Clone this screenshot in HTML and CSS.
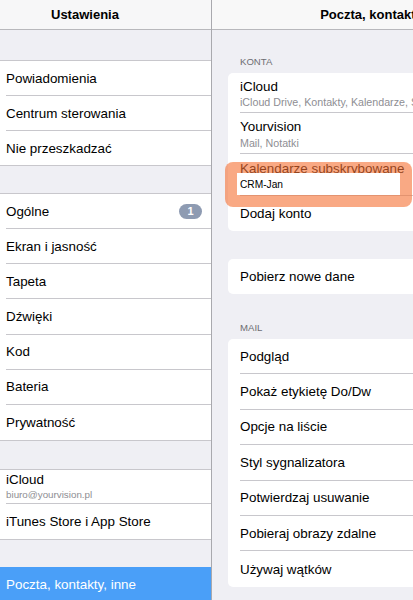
FILE: index.html
```html
<!DOCTYPE html>
<html lang="pl">
<head>
<meta charset="utf-8">
<title>Ustawienia</title>
<link rel="stylesheet" href="styles.css">
</head>
<body>
<div class="screen">
  <aside class="master">
    <header class="bar bar-left"><span class="bar-title">Ustawienia</span></header>

    <div class="group g1">
      <div class="row h35"><div class="cell">Powiadomienia</div></div>
      <div class="row h35"><div class="cell">Centrum sterowania</div></div>
      <div class="row h34"><div class="cell last">Nie przeszkadzać</div></div>
    </div>

    <div class="group g2">
      <div class="row h353"><div class="cell">Ogólne<span class="badge">1</span></div></div>
      <div class="row h353"><div class="cell">Ekran i jasność</div></div>
      <div class="row h353"><div class="cell">Tapeta</div></div>
      <div class="row h353"><div class="cell">Dźwięki</div></div>
      <div class="row h353"><div class="cell">Kod</div></div>
      <div class="row h353"><div class="cell">Bateria</div></div>
      <div class="row h353"><div class="cell last">Prywatność</div></div>
    </div>

    <div class="group g3">
      <div class="row h34"><div class="cell sub-cell"><span>iCloud</span><span class="sub">biuro@yourvision.pl</span></div></div>
      <div class="row h35"><div class="cell last">iTunes Store i App Store</div></div>
    </div>

    <div class="selected">Poczta, kontakty, inne</div>
  </aside>

  <main class="detail">
    <div class="detail-inner">
      <header class="bar bar-right"><span class="bar-title">Poczta, kontakty, inne</span></header>

      <div class="section-label s-konta">KONTA</div>
      <div class="card">
        <div class="crow r-icloud"><div class="ccell csub"><span>iCloud</span><span class="sub">iCloud Drive, Kontakty, Kalendarze, Safari, Notatki</span></div></div>
        <div class="crow r-yv"><div class="ccell csub"><span>Yourvision</span><span class="sub">Mail, Notatki</span></div></div>
        <div class="crow r-kal">
          <div class="ccell kal-cell"><span>Kalendarze subskrybowane</span></div>
          <div class="annot"><div class="annot-box">CRM-Jan</div></div>
        </div>
        <div class="crow r-35"><div class="ccell last">Dodaj konto</div></div>
      </div>

      <div class="card card-gap">
        <div class="crow r-35"><div class="ccell last">Pobierz nowe dane</div></div>
      </div>

      <div class="section-label s-mail">MAIL</div>
      <div class="card">
        <div class="crow r-354"><div class="ccell">Podgląd</div></div>
        <div class="crow r-354"><div class="ccell">Pokaż etykietę Do/Dw</div></div>
        <div class="crow r-354"><div class="ccell">Opcje na liście</div></div>
        <div class="crow r-354"><div class="ccell">Styl sygnalizatora</div></div>
        <div class="crow r-354"><div class="ccell">Potwierdzaj usuwanie</div></div>
        <div class="crow r-354"><div class="ccell">Pobieraj obrazy zdalne</div></div>
        <div class="crow r-354"><div class="ccell last">Używaj wątków</div></div>
      </div>
    </div>
  </main>
</div>
</body>
</html>
```

FILE: styles.css
```css
* { box-sizing: border-box; }

html, body {
  margin: 0;
  padding: 0;
  background: #efeff4;
}

body {
  font-family: "Liberation Sans", Arial, sans-serif;
  font-size: 13.4px;
  color: #000;
  width: 413px;
  height: 600px;
  overflow: hidden;
}

.screen {
  display: flex;
  width: 413px;
  height: 600px;
  overflow: hidden;
}

/* ---------- master (left) ---------- */
.master {
  width: 212px;
  flex: none;
  border-right: 1px solid #a9a9ae;
  background: #efeff4;
  display: flex;
  flex-direction: column;
}

.bar {
  height: 30px;
  background: #f7f7f8;
  border-bottom: 1px solid #b8b8bc;
  display: flex;
  align-items: center;
  font-weight: bold;
  font-size: 13px;
  flex: none;
}

.bar-left {
  padding-left: 51px;
}

.group {
  background: #fff;
  border-top: 1px solid #c8c7cc;
  border-bottom: 1px solid #c8c7cc;
  flex: none;
}

.g1 { margin-top: 30px; }
.g2 { margin-top: 27px; }
.g3 { margin-top: 28px; }

.row {
  display: flex;
  padding-left: 6px;
}

.h34 { height: 34px; }
.h35 { height: 35px; }
.h353 { height: 35.15px; }

.cell {
  flex: 1;
  display: flex;
  align-items: center;
  border-bottom: 1px solid #c8c7cc;
  padding-right: 9px;
  white-space: nowrap;
}

.cell.last { border-bottom: none; }

.badge {
  margin-left: auto;
  background: #8e9bb2;
  color: #fff;
  font-size: 11px;
  font-weight: bold;
  width: 23px;
  height: 15px;
  border-radius: 8px;
  display: flex;
  align-items: center;
  justify-content: center;
}

.cell.sub-cell {
  flex-direction: column;
  align-items: flex-start;
  justify-content: center;
}

.sub-cell span:first-child {
  line-height: 15px;
}

.sub {
  font-size: 9.8px;
  color: #8e8e93;
  line-height: 13px;
  margin-top: 1px;
}

.selected {
  margin-top: 27px;
  height: 36px;
  background: #4a9ff8;
  color: #fff;
  display: flex;
  align-items: center;
  padding-left: 6px;
  flex: none;
}

/* ---------- detail (right) ---------- */
.detail {
  flex: 1;
  overflow: hidden;
  position: relative;
}

.detail-inner {
  width: 352px;
}

.bar-right {
  justify-content: center;
  background: #f8f8f8;
}

.section-label {
  display: flex;
  align-items: flex-end;
  padding-left: 28px;
  padding-bottom: 5px;
  font-size: 9.6px;
  color: #6d6d72;
  line-height: 12px;
}

.s-konta { height: 43px; }
.s-mail { height: 45px; }

.card {
  margin-left: 16px;
  background: #fff;
  border-radius: 5px;
}

.card-gap { margin-top: 28px; }

.crow {
  display: flex;
  padding-left: 12px;
  position: relative;
}

.ccell {
  flex: 1;
  display: flex;
  align-items: center;
  border-bottom: 1px solid #c8c7cc;
  white-space: nowrap;
  overflow: hidden;
}

.ccell.last { border-bottom: none; }

.r-icloud { height: 40px; }
.r-yv { height: 41px; }
.r-kal { height: 42px; }
.r-35 { height: 35px; }
.r-354 { height: 35.4px; }

.ccell.csub {
  flex-direction: column;
  align-items: flex-start;
  justify-content: flex-start;
  padding-top: 6px;
}

.csub span:first-child {
  line-height: 15px;
}

.csub .sub {
  font-size: 10.7px;
  margin-top: 2px;
}

.r-yv .csub .sub {
  margin-top: 3px;
}

.ccell.kal-cell {
  align-items: flex-start;
  padding-top: 7px;
  line-height: 15px;
}

/* annotation highlight drawn over the row */
.annot {
  position: absolute;
  left: -3px;
  top: 8px;
  width: 187px;
  height: 45px;
  border-radius: 8px;
  background: rgba(245, 112, 50, 0.6);
  z-index: 2;
}

.annot-box {
  position: absolute;
  left: 12px;
  top: 11px;
  width: 163px;
  height: 22px;
  background: #fff;
  color: #000;
  font-size: 10.2px;
  display: flex;
  align-items: center;
  padding-left: 3px;
}
```
